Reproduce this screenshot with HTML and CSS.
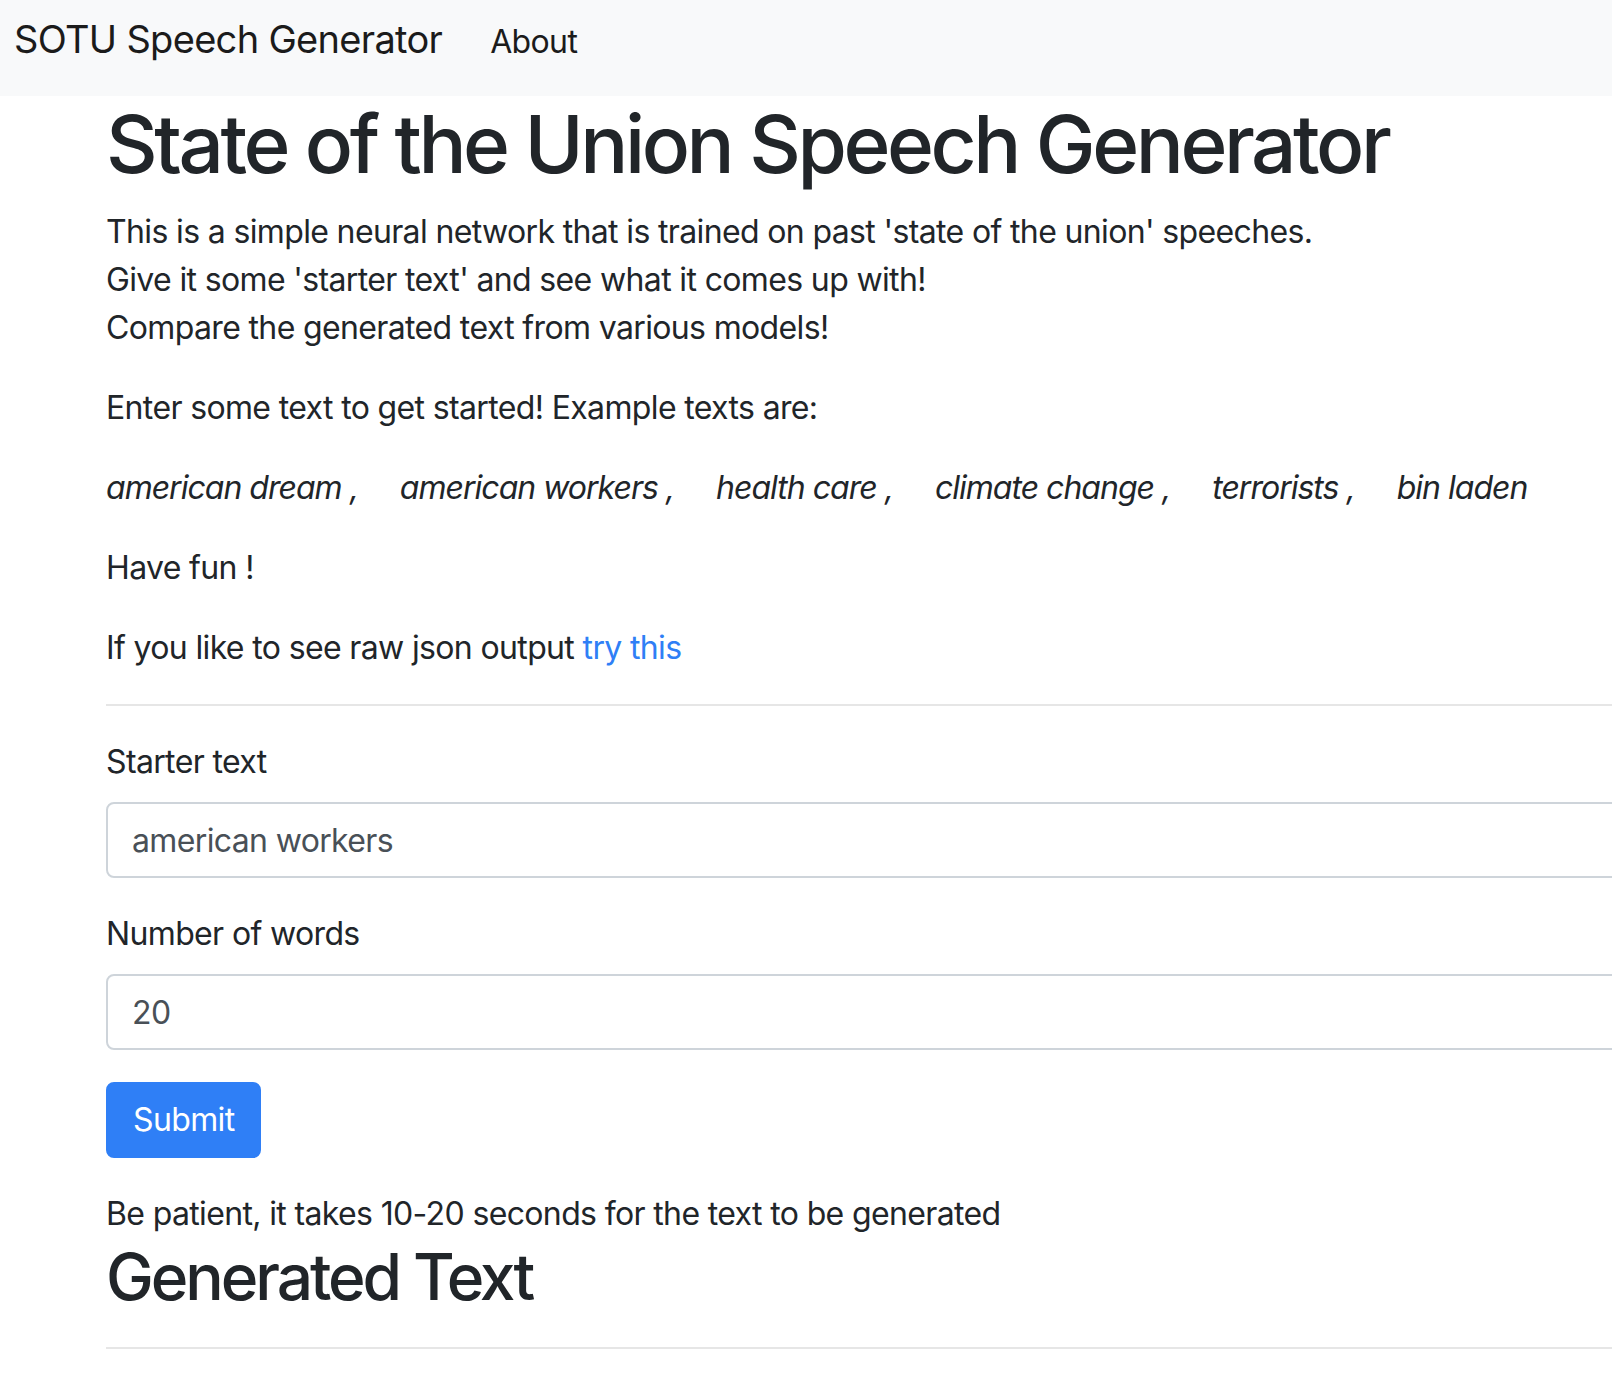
FILE: index.html
```html
<!DOCTYPE html>
<html lang="en">
<head>
<meta charset="utf-8">
<title>SOTU Speech Generator</title>
<link rel="stylesheet" href="styles.css">
</head>
<body>
<nav class="navbar">
  <a class="brand" href="#">SOTU Speech Generator</a>
  <a class="nav-link" href="#">About</a>
</nav>
<main class="container">
  <h1 class="title">State of the Union Speech Generator</h1>
  <p>This is a simple neural network that is trained on past 'state of the union' speeches.<br>Give it some 'starter text' and see what it comes up with!<br>Compare the generated text from various models!</p>
  <p>Enter some text to get started! Example texts are:</p>
  <p class="examples">
    <i>american dream ,</i>
    <i>american workers ,</i>
    <i>health care ,</i>
    <i>climate change ,</i>
    <i>terrorists ,</i>
    <i>bin laden</i>
  </p>
  <p>Have fun !</p>
  <p>If you like to see raw json output <a class="link" href="#">try this</a></p>
  <hr class="rule">
  <form class="form">
    <div class="form-group">
      <label class="label" for="starter">Starter text</label>
      <input class="form-control" id="starter" type="text" value="american workers">
    </div>
    <div class="form-group">
      <label class="label" for="words">Number of words</label>
      <input class="form-control" id="words" type="text" value="20">
    </div>
    <button class="btn" type="button">Submit</button>
  </form>
  <div class="note">Be patient, it takes 10-20 seconds for the text to be generated</div>
  <h2 class="subtitle">Generated Text</h2>
  <hr class="rule rule-bottom">
</main>
</body>
</html>
```
FILE: styles.css
```css
html, body {
  margin: 0;
  padding: 0;
}
body {
  font-family: Inter, "Noto Sans", Roboto, sans-serif;
  font-size: 32px;
  line-height: 48px;
  letter-spacing: -0.02em;
  color: #212529;
  background: #ffffff;
  overflow: hidden;
  width: 1612px;
  height: 1384px;
}
.navbar {
  display: flex;
  align-items: baseline;
  height: 96px;
  padding: 20px 14px 0;
  background: #f8f9fa;
  box-sizing: border-box;
}
.brand {
  font-size: 38px;
  line-height: 38px;
  letter-spacing: -0.018em;
  color: #1b1b1b;
  text-decoration: none;
  margin-right: 48px;
}
.nav-link {
  font-size: 32px;
  line-height: 38px;
  color: #1b1b1b;
  text-decoration: none;
}
.container {
  margin-left: 106px;
  width: 1700px;
}
.title {
  font-size: 80px;
  font-weight: 500;
  line-height: 96px;
  letter-spacing: -0.043em;
  margin: 0 0 16px;
}
p {
  margin: 0 0 32px;
}
.examples {
  display: flex;
  gap: 42px;
}
.examples i {
  font-style: italic;
  letter-spacing: -0.031em;
}
.link {
  color: #2f7ff6;
  text-decoration: none;
}
.rule {
  border: 0;
  border-top: 2px solid #e6e6e6;
  margin: 32px 0;
}
.form {
  margin: 0 0 32px;
}
.form-group {
  margin-bottom: 32px;
}
.label {
  display: block;
  margin-bottom: 16px;
}
.form-control {
  display: block;
  box-sizing: border-box;
  width: 100%;
  height: 76px;
  padding: 12px 24px;
  font: inherit;
  letter-spacing: -0.02em;
  color: #495057;
  border: 2px solid #ced4da;
  border-radius: 8px;
  background: #fff;
}
.btn {
  display: inline-block;
  height: 76px;
  padding: 12px 25px;
  font: inherit;
  letter-spacing: -0.02em;
  color: #fff;
  background: #2f7ff6;
  border: 2px solid #2f7ff6;
  border-radius: 8px;
}
.note {
  margin: 0;
}
.subtitle {
  font-size: 64px;
  font-weight: 500;
  line-height: 77px;
  letter-spacing: -0.048em;
  margin: 0;
}
.rule-bottom {
  margin-top: 32px;
}
```
